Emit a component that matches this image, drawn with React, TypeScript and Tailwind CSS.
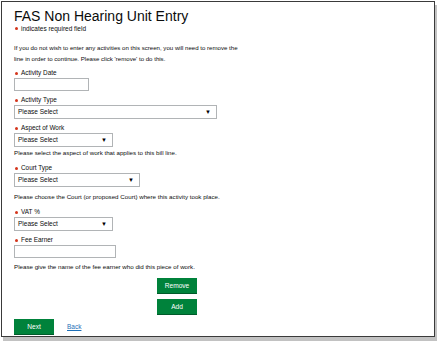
import React from 'react';

const font = { fontFamily: '"Liberation Sans", Arial, sans-serif' };

const Dot: React.FC = () => (
  <span className="inline-block w-[3px] h-[3px] rounded-full bg-[#d4351c] mr-[3px] align-middle" />
);

const Label: React.FC<{ text: string; className?: string }> = ({ text, className = '' }) => (
  <div className={`flex items-center h-[10px] text-[6.4px] text-[#0b0c0c] pl-[1px] ${className}`}>
    <Dot />
    <span>{text}</span>
  </div>
);

const Help: React.FC<{ text: string; className?: string }> = ({ text, className = '' }) => (
  <div className={`h-[10px] leading-[10px] text-[6.2px] text-[#0b0c0c] ${className}`}>{text}</div>
);

const TextBox: React.FC<{ width: string }> = ({ width }) => (
  <div className={`${width} h-[13px] border border-[#b1b4b6] bg-white`} />
);

const SelectBox: React.FC<{ width: string }> = ({ width }) => (
  <div className={`${width} h-[14px] border border-[#b1b4b6] bg-white flex items-center justify-between pl-[3px] pr-[5px]`}>
    <span className="text-[6.5px] text-[#0b0c0c]">Please Select</span>
    <span className="text-[6px] text-black leading-none">▼</span>
  </div>
);

const GreenButton: React.FC<{ label: string }> = ({ label }) => (
  <div className="w-[40px] h-[16px] bg-[#00823b] text-white text-[6.6px] flex items-center justify-center border-b border-[#005a2a]">
    {label}
  </div>
);

export default function App() {
  return (
    <div className="w-[437px] h-[341px] bg-white pl-[1px] pt-[1px] overflow-hidden" style={font}>
      <div className="w-[434px] h-[336px] border border-[#3a3a3a] bg-white shadow-[2px_4px_0_0_#c2c2c2] px-[12px] pt-[6px]">
        <h1 className="text-[14px] leading-[16px] text-[#0b0c0c]">FAS Non Hearing Unit Entry</h1>
        <div className="flex items-center h-[9px] text-[6.5px] text-[#0b0c0c] pl-[1px]">
          <Dot />
          <span>indicates required field</span>
        </div>

        <div className="mt-[9px] text-[6.1px] leading-[11px] text-[#0b0c0c]">
          <div>If you do not wish to enter any activities on this screen, you will need to remove the</div>
          <div>line in order to continue. Please click 'remove' to do this.</div>
        </div>

        <Label text="Activity Date" className="mt-[4px]" />
        <TextBox width="w-[75px]" />

        <Label text="Activity Type" className="mt-[4px]" />
        <SelectBox width="w-[203px]" />

        <Label text="Aspect of Work" className="mt-[4px]" />
        <SelectBox width="w-[99px]" />
        <Help text="Please select the aspect of work that applies to this bill line." className="mt-[1px]" />

        <Label text="Court Type" className="mt-[5px]" />
        <SelectBox width="w-[126px]" />
        <Help text="Please choose the Court (or proposed Court) where this activity took place." className="mt-[5px]" />

        <Label text="VAT %" className="mt-[5px]" />
        <SelectBox width="w-[99px]" />

        <Label text="Fee Earner" className="mt-[4px]" />
        <TextBox width="w-[102px]" />
        <Help text="Please give the name of the fee earner who did this piece of work." className="mt-[4px]" />

        <div className="flex flex-col gap-[5px] mt-[6px] pl-[143px]">
          <GreenButton label="Remove" />
          <GreenButton label="Add" />
        </div>

        <div className="flex items-center mt-[4px]">
          <GreenButton label="Next" />
          <a className="ml-[13px] text-[6.5px] text-[#1d70b8] underline">Back</a>
        </div>
      </div>
    </div>
  );
}
